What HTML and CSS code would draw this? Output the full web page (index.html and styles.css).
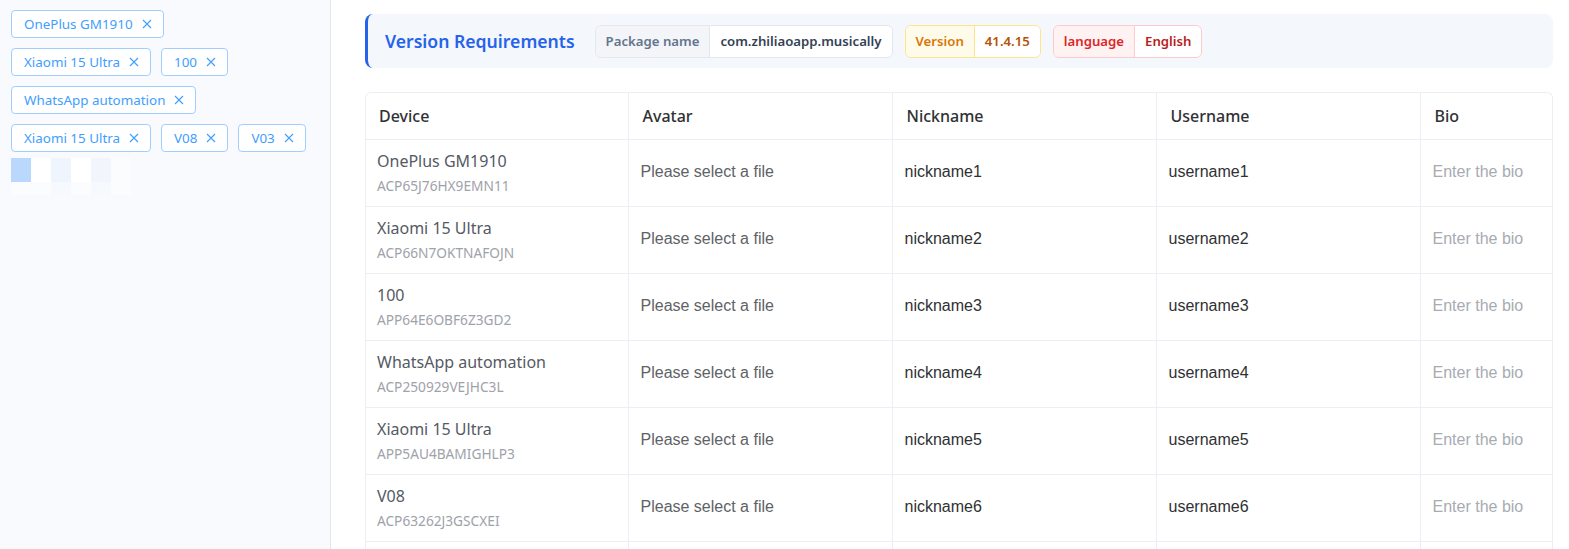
FILE: index.html
```html
<!DOCTYPE html>
<html lang="en">
<head>
    <meta charset="UTF-8">
    <meta name="viewport" content="width=device-width, initial-scale=1.0">
    <title>Batch Profile Editor</title>
    <link rel="stylesheet" href="styles.css">
</head>
<body>
    <div class="layout">
        <!-- Selected devices -->
        <aside class="sidebar">
            <div class="tag-list" id="tagList"></div>
            <div class="blur-box">
                <span class="px a"></span><span class="px"></span><span class="px c"></span><span class="px"></span><span class="px e"></span><span class="px f"></span>
                <span class="px g s"></span><span class="px s"></span><span class="px s h"></span><span class="px s"></span><span class="px s h"></span><span class="px s"></span>
            </div>
        </aside>

        <main class="main">
            <!-- Version requirements -->
            <div class="req-card">
                <h2 class="req-title">Version Requirements</h2>
                <div class="badge badge-gray">
                    <span class="badge-label">Package name</span>
                    <span class="badge-value">com.zhiliaoapp.musically</span>
                </div>
                <div class="badge badge-amber">
                    <span class="badge-label">Version</span>
                    <span class="badge-value">41.4.15</span>
                </div>
                <div class="badge badge-red">
                    <span class="badge-label">language</span>
                    <span class="badge-value">English</span>
                </div>
            </div>

            <div class="table-wrap">
                <table class="profile-table">
                    <colgroup>
                        <col class="c1"><col class="c2"><col class="c3"><col class="c4"><col class="c5">
                    </colgroup>
                    <thead>
                        <tr>
                            <th>Device</th>
                            <th>Avatar</th>
                            <th>Nickname</th>
                            <th>Username</th>
                            <th>Bio</th>
                        </tr>
                    </thead>
                    <tbody id="rows"></tbody>
                </table>
            </div>
        </main>
    </div>

    <script>
        const tagRows = [
            ["OnePlus GM1910"],
            ["Xiaomi 15 Ultra", "100"],
            ["WhatsApp automation"],
            ["Xiaomi 15 Ultra", "V08", "V03"]
        ];

        const devices = [
            { name: "OnePlus GM1910", serial: "ACP65J76HX9EMN11" },
            { name: "Xiaomi 15 Ultra", serial: "ACP66N7OKTNAFOJN" },
            { name: "100", serial: "APP64E6OBF6Z3GD2" },
            { name: "WhatsApp automation", serial: "ACP250929VEJHC3L" },
            { name: "Xiaomi 15 Ultra", serial: "APP5AU4BAMIGHLP3" },
            { name: "V08", serial: "ACP63262J3GSCXEI" },
            { name: "V03", serial: "ACP63262J3GSCXEJ" }
        ];

        const closeIcon = '<svg class="close" viewBox="0 0 10 10" width="10" height="10"><path d="M1 1L9 9M9 1L1 9" stroke="currentColor" stroke-width="1.1" fill="none"/></svg>';

        const tagList = document.getElementById('tagList');
        tagRows.forEach(row => {
            const line = document.createElement('div');
            line.className = 'tag-row';
            line.innerHTML = row.map(t => `<span class="tag">${t}${closeIcon}</span>`).join('');
            tagList.appendChild(line);
        });

        const body = document.getElementById('rows');
        devices.forEach((d, i) => {
            const tr = document.createElement('tr');
            tr.innerHTML = `
                <td class="device">
                    <div class="dev-name">${d.name}</div>
                    <div class="dev-serial">${d.serial}</div>
                </td>
                <td class="field muted">Please select a file</td>
                <td class="field">nickname${i + 1}</td>
                <td class="field">username${i + 1}</td>
                <td class="field placeholder">Enter the bio</td>
            `;
            body.appendChild(tr);
        });
    </script>
</body>
</html>
```

FILE: styles.css
```css
* {
    box-sizing: border-box;
}

body {
    margin: 0;
    font-family: "Noto Sans", "Open Sans", sans-serif;
    background-color: #fff;
    overflow: hidden;
}

.layout {
    display: flex;
    height: 549px;
}

/* Sidebar */
.sidebar {
    width: 331px;
    flex-shrink: 0;
    background-color: #f8fafd;
    border-right: 1px solid #e4e7ed;
    padding: 10px 11px;
}

.tag-list {
    display: flex;
    flex-direction: column;
    gap: 10px;
}

.tag-row {
    display: flex;
    gap: 10px;
}

.tag {
    display: inline-flex;
    align-items: center;
    height: 28px;
    padding: 0 11px 0 12px;
    border: 1px solid #a0cfff;
    border-radius: 4px;
    background-color: #fff;
    color: #409eff;
    font-size: 13.4px;
}

.close {
    margin-left: 9px;
    width: 10px;
    height: 10px;
}

.blur-box {
    display: grid;
    grid-template-columns: repeat(6, 20px);
    grid-template-rows: 24px 13px;
    margin-top: 6px;
}

.px { background-color: #fff; }
.px.a { background-color: #b9d8fb; }
.px.c { background-color: #eef5fd; }
.px.e { background-color: #f2f6fc; }
.px.f { background-color: #fafcfe; }
.px.g { background-color: #deecfc; }
.px.s { background-color: #fbfcfe; }
.px.h { background-color: #f6f9fd; }

/* Main */
.main {
    flex: 1;
    padding: 14px 16px 0 34px;
    min-width: 0;
}

.req-card {
    display: flex;
    align-items: center;
    gap: 12px;
    height: 54px;
    padding-left: 17px;
    background-color: #f4f7fc;
    border-left: 3px solid #2563eb;
    border-radius: 8px;
}

.req-title {
    margin: 0 8px 0 0;
    font-size: 17.6px;
    font-weight: 600;
    color: #2563eb;
}

.badge {
    display: flex;
    height: 33px;
    border: 1px solid;
    border-radius: 6px;
    overflow: hidden;
    font-size: 13.2px;
    font-weight: 600;
}

.badge span {
    display: flex;
    align-items: center;
    padding: 0 10px;
}

.badge-value {
    background-color: #fff;
    border-left: 1px solid;
}

.badge-gray { border-color: #e2e8f0; }
.badge-gray .badge-label { background-color: #f3f5f9; color: #64748b; }
.badge-gray .badge-value { color: #334155; border-color: #e2e8f0; }

.badge-amber { border-color: #fde68a; }
.badge-amber .badge-label { background-color: #fffbeb; color: #d97706; }
.badge-amber .badge-value { color: #b45309; border-color: #fde68a; }

.badge-red { border-color: #fecaca; }
.badge-red .badge-label { background-color: #fef2f2; color: #dc2626; }
.badge-red .badge-value { color: #b91c1c; border-color: #fecaca; }

/* Table */
.table-wrap {
    margin-top: 24px;
    border: 1px solid #ebeef5;
    border-bottom: none;
    border-radius: 6px 6px 0 0;
    overflow: hidden;
}

.profile-table {
    border-collapse: collapse;
    table-layout: fixed;
    width: 1318px;
}

.c1 { width: 262px; }
.c2 { width: 264px; }
.c3 { width: 264px; }
.c4 { width: 264px; }
.c5 { width: 264px; }

.profile-table th,
.profile-table td {
    border-right: 1px solid #ebeef5;
    border-bottom: 1px solid #ebeef5;
    text-align: left;
}

.profile-table th {
    height: 46px;
    padding: 0 13px 0 14px;
    font-size: 16px;
    font-weight: 500;
    color: #303133;
}

.profile-table th:first-child {
    padding-left: 13px;
}

.profile-table td.device {
    height: 67px;
    padding: 0 11px 1px;
}

.dev-name {
    font-size: 16px;
    color: #555a63;
    line-height: 22px;
}

.dev-serial {
    margin-top: 5px;
    font-size: 13.7px;
    color: #9ea2aa;
    line-height: 18px;
}

.profile-table td.field {
    height: 67px;
    padding: 0 12px 2px;
    font-family: "Liberation Sans", Arial, sans-serif;
    font-size: 16px;
    color: #303133;
}

.profile-table td.muted {
    color: #606266;
}

.profile-table td.placeholder {
    color: #a8abb2;
}
```
